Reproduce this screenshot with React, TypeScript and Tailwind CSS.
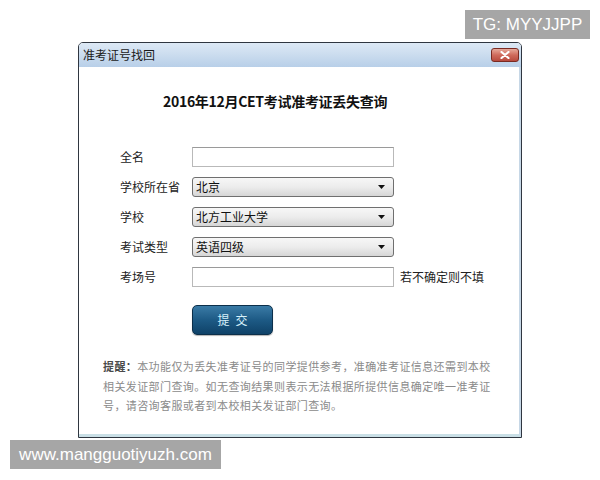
const cjk = "font-['Noto_Sans_CJK_SC','Noto_Sans',sans-serif]";

const Arrow = () => (
  <svg width="7" height="4" viewBox="0 0 7 4" className="shrink-0">
    <path d="M0 0h7L3.5 4z" fill="#111" />
  </svg>
);

const Select = ({ value }: { value: string }) => (
  <div className="flex h-[20px] w-[202px] items-center justify-between rounded-[3px] border border-[#6f6f6f] bg-gradient-to-b from-[#f7f7f7] via-[#ececec] to-[#d6d6d6] pl-[3px] pr-[8px] text-[12px] leading-none text-[#111]">
    <span>{value}</span>
    <Arrow />
  </div>
);

const Input = () => (
  <div className="h-[20px] w-[202px] border border-[#b9b9b9] border-t-[#9a9a9a] bg-white" />
);

const Row = ({ label, children }: { label: string; children: React.ReactNode }) => (
  <div className="flex h-[20px] items-center">
    <div className="w-[72px] text-[12px] text-[#222]">{label}</div>
    {children}
  </div>
);

export default function App() {
  return (
    <div className={`relative h-[480px] w-[600px] overflow-hidden bg-white ${cjk}`}>
      <div className="absolute left-[465px] top-[10px] flex h-[29px] w-[125px] items-center justify-center bg-[#a6a6a6] font-['Liberation_Sans',sans-serif] text-[17px] text-white">
        TG: MYYJJPP
      </div>

      <div className="ml-[78px] pt-[42px]">
        <div className="flex h-[396px] w-[444px] flex-col overflow-hidden rounded-t-[5px] border border-[#2f3640]">
          <div className="flex h-[24px] shrink-0 items-center justify-between bg-gradient-to-b from-[#dde9f5] to-[#b8cfe8] pl-[4px] pr-[2px]">
            <span className="text-[12px] text-[#1a1a1a]">准考证号找回</span>
            <div className="flex h-[14px] w-[28px] items-center justify-center rounded-[3px] border border-[#7a2a22] bg-gradient-to-b from-[#e6a99b] via-[#cf6a5c] to-[#b84a3e]">
              <svg width="10" height="8" viewBox="0 0 10 8">
                <path d="M1.5 1l7 6M8.5 1l-7 6" stroke="#fff" strokeWidth="2.2" strokeLinecap="round" />
              </svg>
            </div>
          </div>

          <div className="flex flex-1 flex-col border-b-[3px] border-r-[2px] border-b-[#c9dfe6] border-r-[#c6d7e6] bg-white">
            <h1 className="ml-[84px] mt-[24px] text-[14px] font-bold leading-[20px] tracking-[-0.3px] text-[#111]">
              2016年12月CET考试准考证丢失查询
            </h1>

            <div className="ml-[41px] mt-[36px] flex flex-col gap-[10px]">
              <Row label="全名">
                <Input />
              </Row>
              <Row label="学校所在省">
                <Select value="北京" />
              </Row>
              <Row label="学校">
                <Select value="北方工业大学" />
              </Row>
              <Row label="考试类型">
                <Select value="英语四级" />
              </Row>
              <Row label="考场号">
                <Input />
                <span className="ml-[6px] text-[12px] text-[#222]">若不确定则不填</span>
              </Row>
            </div>

            <div className="ml-[113px] mt-[18px]">
              <button className="flex h-[30px] w-[81px] items-center justify-center rounded-[5px] border border-[#0c2f4a] bg-gradient-to-b from-[#3a7ba6] via-[#1d5a85] to-[#0f4268] text-[12px] tracking-[6px] text-[#d8f1fb] shadow-[0_1px_1px_rgba(0,0,0,0.3)]">
                <span className="pl-[6px]">提交</span>
              </button>
            </div>

            <div className="ml-[24px] mt-[22px] whitespace-nowrap text-[11px] leading-[19.5px] tracking-[0.4px] text-[#8a8a8a]">
              <div>
                <span className="font-bold text-[#4a4a4a]">提醒：</span>
                本功能仅为丢失准考证号的同学提供参考，准确准考证信息还需到本校
              </div>
              <div>相关发证部门查询。如无查询结果则表示无法根据所提供信息确定唯一准考证</div>
              <div>号，请咨询客服或者到本校相关发证部门查询。</div>
            </div>
          </div>
        </div>
      </div>

      <div className="absolute left-[10px] top-[440px] flex h-[29px] w-[211px] items-center justify-center bg-[#a6a6a6] font-['Liberation_Sans',sans-serif] text-[17px] text-white">
        www.mangguotiyuzh.com
      </div>
    </div>
  );
}
